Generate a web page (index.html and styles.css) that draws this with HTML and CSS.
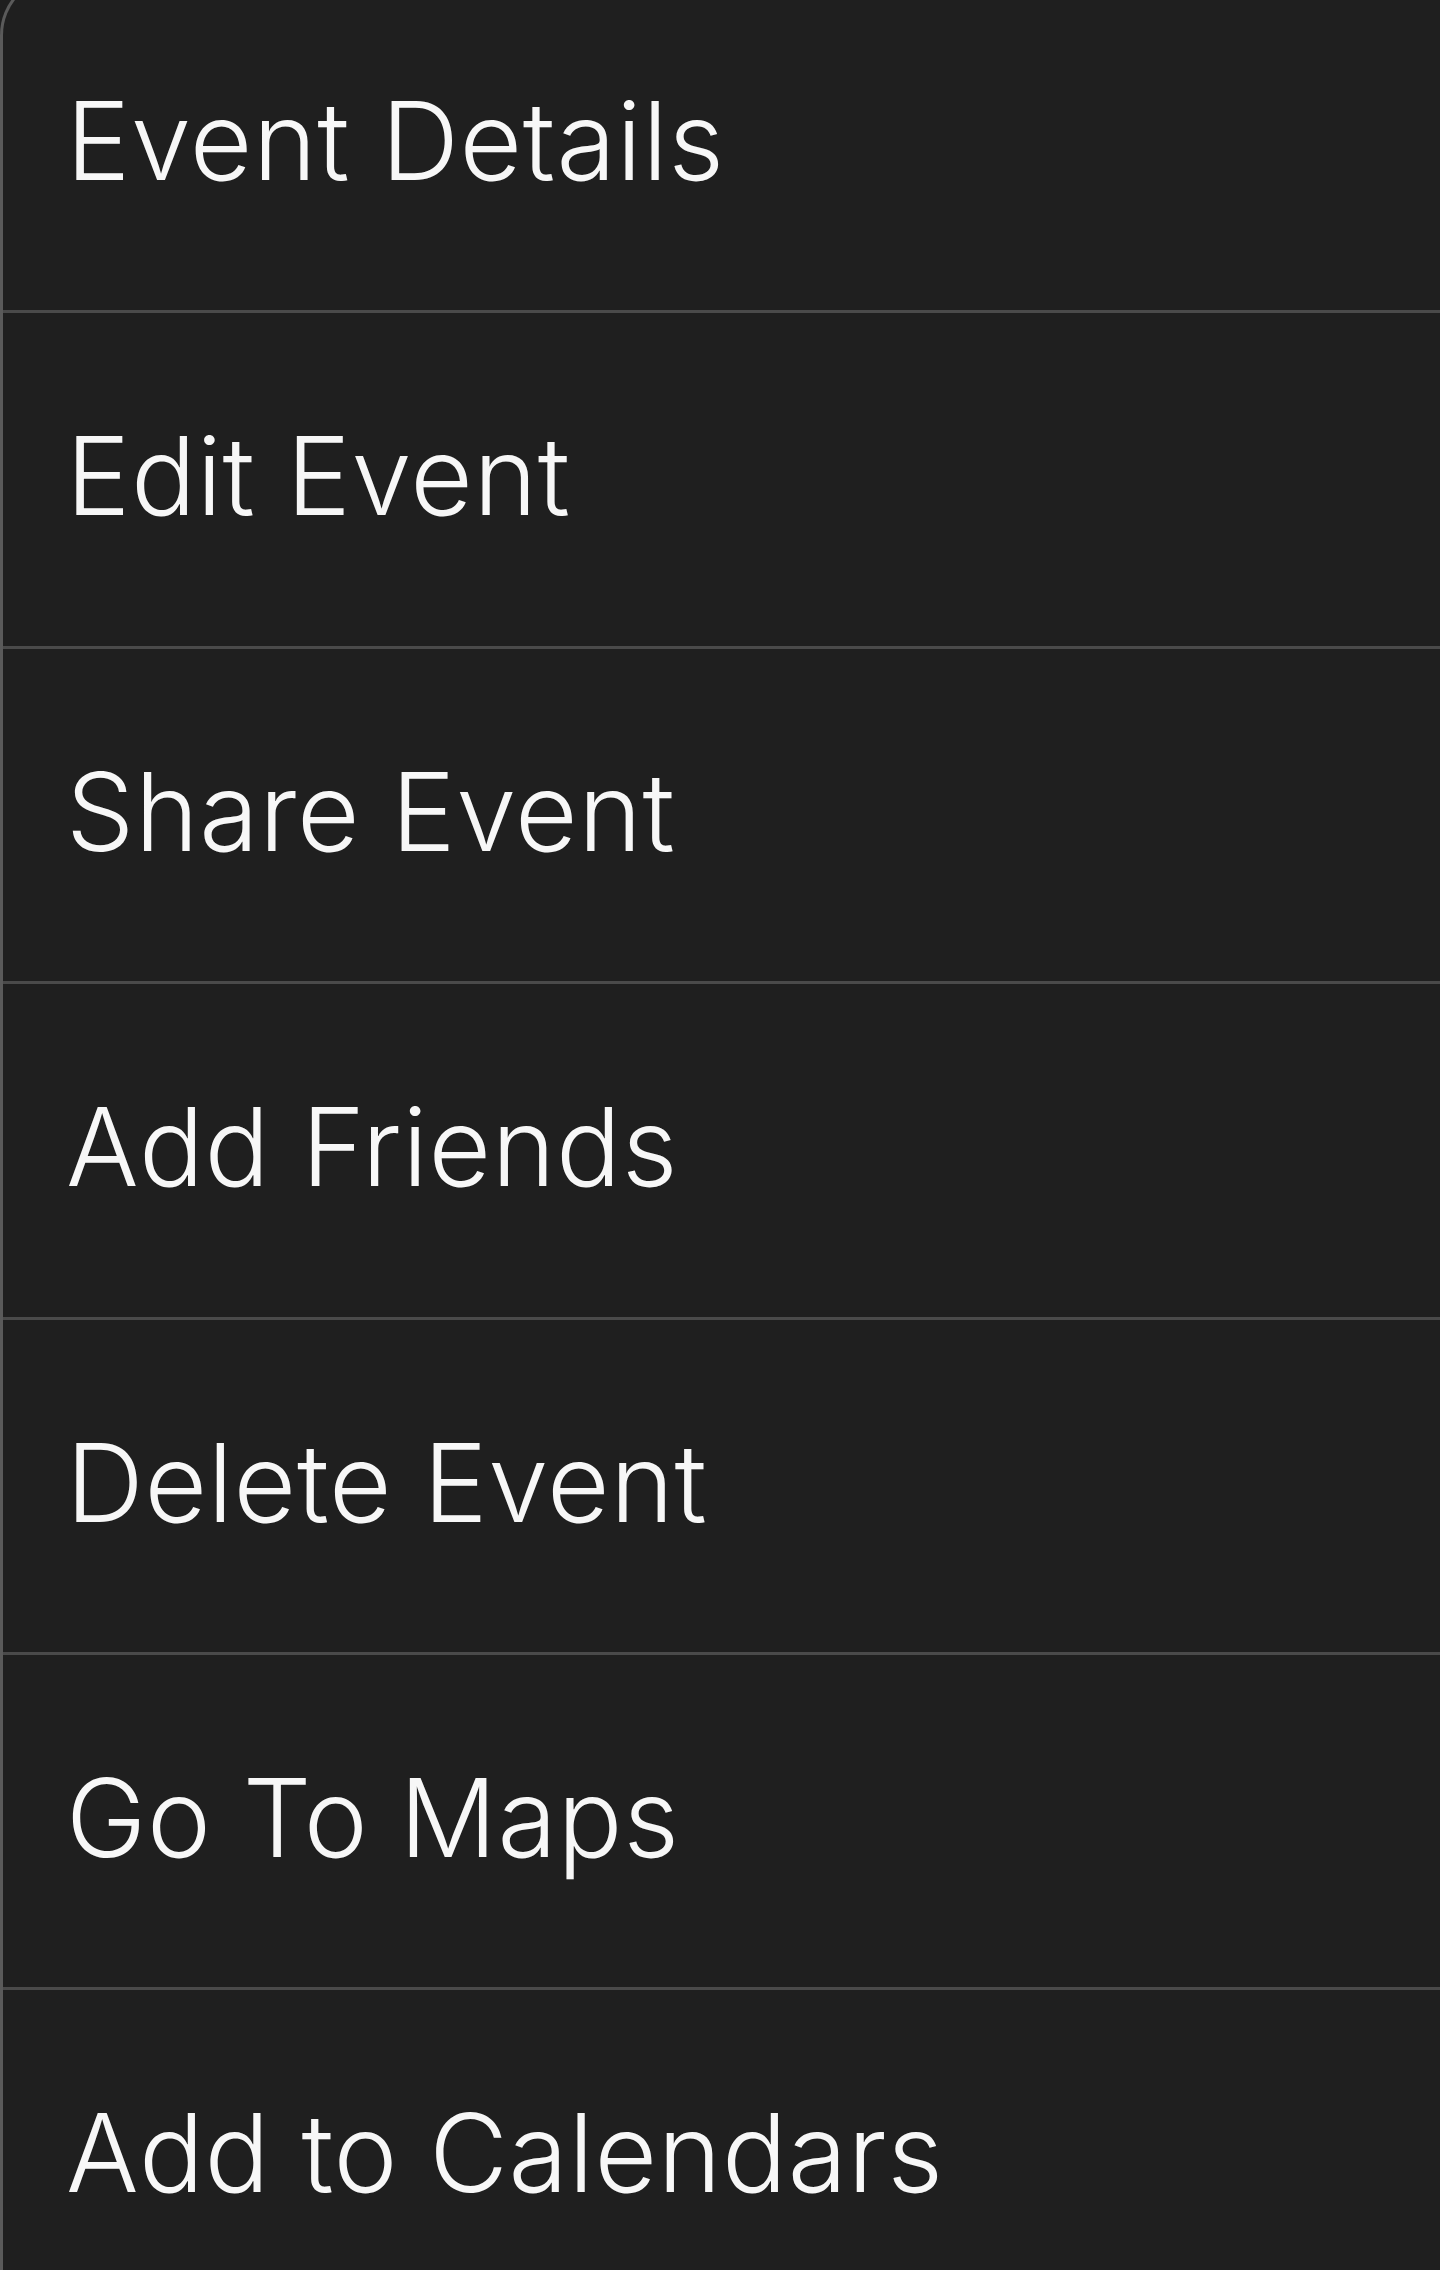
FILE: index.html
```html
<!DOCTYPE html>
<html lang="en">
<head>
  <meta charset="UTF-8" />
  <meta name="viewport" content="width=device-width, initial-scale=1.0"/>
  <title>Event Menu</title>
  <link rel="stylesheet" href="styles.css">
</head>
<body>

  <ul class="action-sheet">
    <li class="action-item">Event Details</li>
    <li class="action-item">Edit Event</li>
    <li class="action-item">Share Event</li>
    <li class="action-item">Add Friends</li>
    <li class="action-item">Delete Event</li>
    <li class="action-item">Go To Maps</li>
    <li class="action-item">Add to Calendars</li>
  </ul>

</body>
</html>
```

FILE: styles.css
```css
body {
  margin: 0;
  background-color: #1f1f1f;
  font-family: Inter, "Open Sans", sans-serif;
  color: #f7f7f7;
  overflow: hidden;
}

.action-sheet {
  list-style: none;
  margin: -25px 0 0 0;
  padding: 0;
  background: #1f1f1f;
  border-left: 3px solid #5a5a5a;
  border-top: 3px solid #5a5a5a;
  border-top-left-radius: 60px;
}

.action-item {
  box-sizing: border-box;
  height: 335.4px;
  padding: 109px 0 0 63px;
  font-size: 108px;
  font-weight: 300;
  line-height: 108px;
  letter-spacing: 0.7px;
  border-bottom: 3px solid #4a4a4a;
  white-space: nowrap;
}
```
